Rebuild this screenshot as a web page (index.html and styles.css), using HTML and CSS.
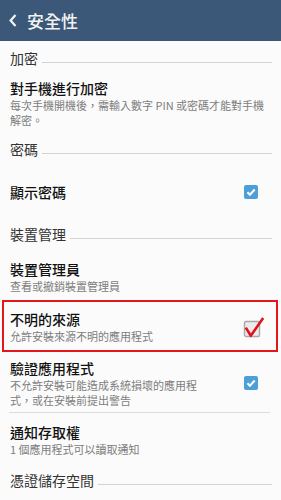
FILE: index.html
```html
<!DOCTYPE html>
<html lang="zh-Hant">
<head>
    <meta charset="UTF-8">
    <meta name="viewport" content="width=device-width, initial-scale=1.0">
    <title>安全性</title>
    <link rel="stylesheet" href="styles.css">
</head>
<body>
    <header class="topbar">
        <svg class="back" width="8" height="13" viewBox="0 0 8 13">
            <path d="M6.5 1 L1.6 6.5 L6.5 12" fill="none" stroke="#f4f4f4" stroke-width="2.2"/>
        </svg>
        <h1 class="title">安全性</h1>
    </header>

    <div class="category"><span>加密</span><i class="rule"></i></div>
    <div class="item">
        <div class="text">
            <div class="item-title">對手機進行加密</div>
            <div class="item-summary">每次手機開機後，需輸入數字 PIN 或密碼才能對手機<br>解密。</div>
        </div>
    </div>

    <div class="category"><span>密碼</span><i class="rule"></i></div>
    <div class="item single">
        <div class="item-title">顯示密碼</div>
        <span class="check">
            <svg width="14" height="14" viewBox="0 0 14 14"><path d="M3.4 7.2 L5.9 9.7 L10.7 4.5" fill="none" stroke="#fff" stroke-width="2"/></svg>
        </span>
    </div>

    <div class="category"><span>裝置管理</span><i class="rule"></i></div>
    <div class="item loose">
        <div class="text">
            <div class="item-title">裝置管理員</div>
            <div class="item-summary">查看或撤銷裝置管理員</div>
        </div>
    </div>

    <div class="item flagged">
        <div class="text">
            <div class="item-title">不明的來源</div>
            <div class="item-summary">允許安裝來源不明的應用程式</div>
        </div>
        <svg class="red-check" width="22" height="22" viewBox="0 0 22 22">
            <rect x="1.5" y="5.5" width="15" height="15" rx="1.5" fill="#ececec" stroke="#a9a9a9" stroke-width="1.4"/>
            <path d="M2.8 11.6 L7.8 19.8 L20.2 2" fill="none" stroke="#e0141c" stroke-width="2.6" stroke-linejoin="round"/>
        </svg>
    </div>

    <div class="item tight">
        <div class="text">
            <div class="item-title">驗證應用程式</div>
            <div class="item-summary">不允許安裝可能造成系統損壞的應用程<br>式，或在安裝前提出警告</div>
        </div>
        <span class="check">
            <svg width="14" height="14" viewBox="0 0 14 14"><path d="M3.4 7.2 L5.9 9.7 L10.7 4.5" fill="none" stroke="#fff" stroke-width="2"/></svg>
        </span>
    </div>
    <div class="divider"></div>

    <div class="item open">
        <div class="text">
            <div class="item-title">通知存取權</div>
            <div class="item-summary">1 個應用程式可以讀取通知</div>
        </div>
    </div>

    <div class="category"><span>憑證儲存空間</span><i class="rule"></i></div>
</body>
</html>
```

FILE: styles.css
```css
/* Page */
body {
    margin: 0;
    background: #fbfbfb;
    font-family: "Noto Sans CJK TC", "Noto Sans CJK SC", sans-serif;
    color: #1a1a1a;
    overflow: hidden;
}

/* Action bar */
.topbar {
    height: 41px;
    background: #3b5878;
    display: flex;
    align-items: center;
    padding-left: 9px;
}
.back {
    margin-right: 10px;
}
.title {
    margin: 0;
    font-size: 17px;
    font-weight: 500;
    line-height: 1;
    color: #f2f2f2;
}

/* Section headers */
.category {
    display: flex;
    align-items: center;
    padding: 7px 9px 3px 10px;
    font-size: 14px;
    line-height: 20px;
    color: #333;
}
.category .rule {
    flex: 1;
    height: 1px;
    margin: 9px 0 0 4px;
    background: #d3d3d3;
}

/* Preference rows */
.item {
    display: flex;
    align-items: center;
    justify-content: space-between;
    padding: 7px 8px 4px 10px;
}
.item.single {
    padding-top: 20px;
    padding-bottom: 15px;
}
.item.loose {
    padding-top: 12px;
    padding-bottom: 6px;
}
.item.tight {
    padding-top: 6px;
    padding-bottom: 4px;
}
.item.open {
    padding-top: 9px;
    padding-bottom: 6px;
}
.item.flagged {
    margin: 0 3px 0 2px;
    padding: 7px 11px 6px 6px;
    border: 2px solid #e3161c;
}
.item-title {
    font-size: 14px;
    font-weight: 500;
    line-height: 20px;
    color: #111;
}
.item-summary {
    font-size: 11px;
    line-height: 15px;
    color: #7d7d7d;
    white-space: nowrap;
}

/* Checkboxes */
.check {
    width: 14px;
    height: 14px;
    margin-right: 15px;
    border-radius: 2px;
    background: #4d9fd9;
    display: flex;
}
.red-check {
    display: block;
}

.divider {
    height: 1px;
    margin: 0 11px 0 9px;
    background: #dcdcdc;
}
```
